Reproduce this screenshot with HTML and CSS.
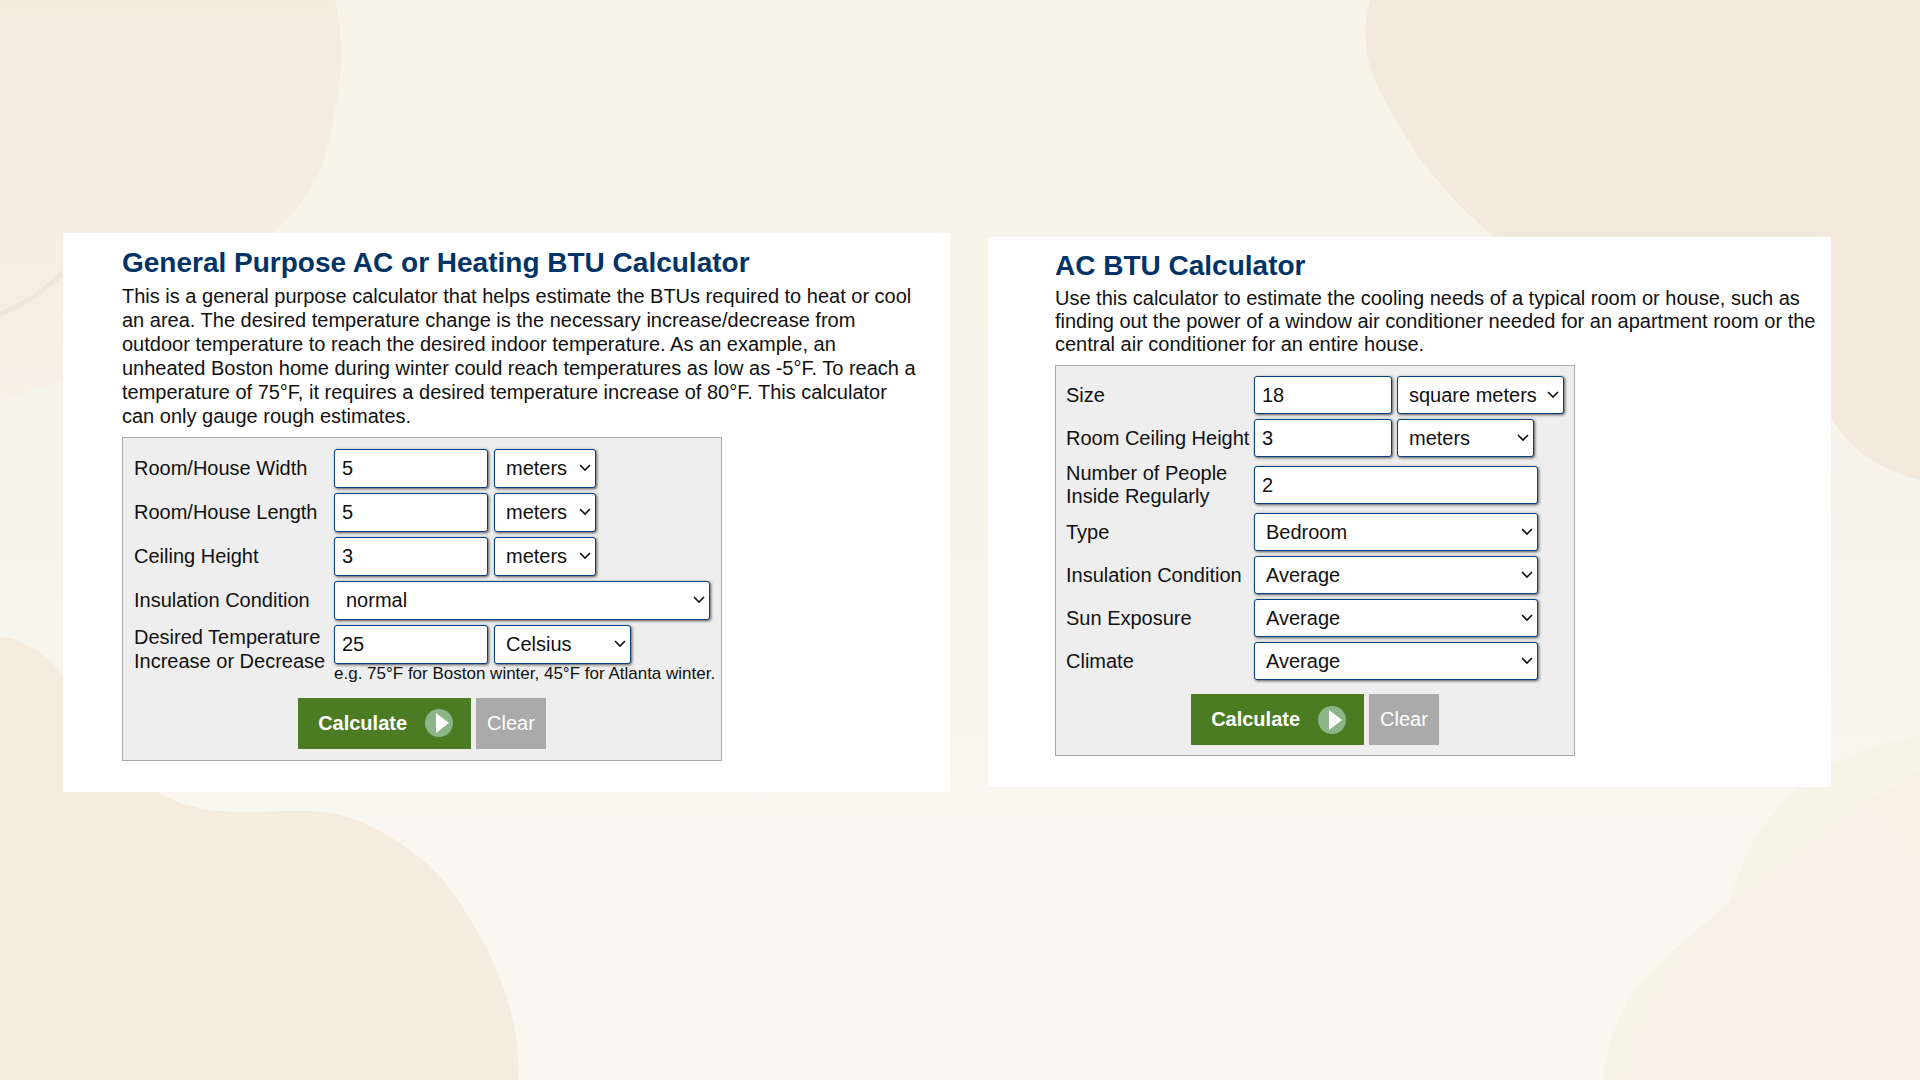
FILE: index.html
```html
<!DOCTYPE html>
<html lang="en">
<head>
  <meta charset="UTF-8">
  <meta name="viewport" content="width=device-width, initial-scale=1.0">
  <title>BTU Calculator</title>
  <link rel="stylesheet" href="styles.css">
</head>
<body>
  <svg class="backdrop" viewBox="0 0 1920 1080" preserveAspectRatio="none" aria-hidden="true">
    <defs>
      <linearGradient id="fade" x1="0" y1="0" x2="0" y2="1">
        <stop offset="0" stop-color="#f4ebdf"/>
        <stop offset="1" stop-color="#f7f0e6"/>
      </linearGradient>
      <linearGradient id="ridge" x1="1" y1="0" x2="0" y2="1">
        <stop offset="0" stop-color="#f6f0e5"/>
        <stop offset="0.3" stop-color="#f6f2e7"/>
      </linearGradient>
    </defs>
    <path fill="url(#fade)" d="M0 0H335C343 35 343 75 335 110C327 165 312 200 273 232C200 300 150 360 0 400Z"/>
    <path fill="#f3eadd" d="M1370 0C1361 35 1366 70 1385 100C1410 150 1446 197 1492 235C1580 310 1780 320 1831 418C1850 450 1880 470 1920 480V0Z"/>
    <path fill="#f4ecdf" d="M0 636C25 640 48 655 63 676C100 730 120 765 157 792C185 808 210 812 245 812C272 812 300 810 325 812C360 816 415 845 449 887C490 945 522 1010 518 1080H0Z"/>
    <path fill="#f6f3e7" d="M1920 736C1880 744 1850 754 1830 766C1780 796 1745 840 1730 902C1690 935 1655 965 1636 988C1615 1020 1606 1050 1603 1080H1920Z"/>
    <path fill="url(#ridge)" d="M1920 772C1850 805 1790 855 1730 902C1680 945 1640 990 1620 1080H1920Z"/>
    <path fill="none" stroke="#eee6d6" stroke-width="5" d="M-4 316C20 306 45 292 66 270"/>
  </svg>

  <main class="page">
    <section class="panel general">
      <h2>General Purpose AC or Heating BTU Calculator</h2>
      <p>This is a general purpose calculator that helps estimate the BTUs required to heat or cool an area. The desired temperature change is the necessary increase/decrease from outdoor temperature to reach the desired indoor temperature. As an example, an unheated Boston home during winter could reach temperatures as low as -5°F. To reach a temperature of 75°F, it requires a desired temperature increase of 80°F. This calculator can only gauge rough estimates.</p>

      <form class="calc">
        <div class="fields">
          <label for="width">Room/House Width</label>
          <div class="controls">
            <input type="text" id="width" value="5">
            <select aria-label="Width unit"><option>feet</option><option selected>meters</option></select>
          </div>

          <label for="length">Room/House Length</label>
          <div class="controls">
            <input type="text" id="length" value="5">
            <select aria-label="Length unit"><option>feet</option><option selected>meters</option></select>
          </div>

          <label for="ceiling">Ceiling Height</label>
          <div class="controls">
            <input type="text" id="ceiling" value="3">
            <select aria-label="Ceiling height unit"><option>feet</option><option selected>meters</option></select>
          </div>

          <label for="insulation">Insulation Condition</label>
          <div class="controls">
            <select id="insulation" class="full"><option>normal</option><option>good</option><option>poor</option></select>
          </div>

          <label for="temperature">Desired Temperature Increase or Decrease</label>
          <div class="controls">
            <input type="text" id="temperature" value="25">
            <select class="wide" aria-label="Temperature unit"><option>Fahrenheit</option><option selected>Celsius</option></select>
            <small>e.g. 75°F for Boston winter, 45°F for Atlanta winter.</small>
          </div>
        </div>
        <div class="buttons">
          <button type="button" class="calculate">Calculate
            <svg width="28" height="28" viewBox="0 0 28 28" aria-hidden="true">
              <circle cx="14" cy="14" r="14" fill="#8db587"/>
              <path d="M11 4L24 14L11 24Z" fill="#fff"/>
            </svg>
          </button>
          <button type="reset" class="clear">Clear</button>
        </div>
      </form>
    </section>

    <section class="panel ac">
      <h2>AC BTU Calculator</h2>
      <p>Use this calculator to estimate the cooling needs of a typical room or house, such as finding out the power of a window air conditioner needed for an apartment room or the central air conditioner for an entire house.</p>

      <form class="calc">
        <div class="fields">
          <label for="size">Size</label>
          <div class="controls">
            <input type="text" id="size" value="18">
            <select class="area" aria-label="Size unit"><option>square feet</option><option selected>square meters</option></select>
          </div>

          <label for="room-ceiling">Room Ceiling Height</label>
          <div class="controls">
            <input type="text" id="room-ceiling" value="3">
            <select class="wide" aria-label="Room ceiling height unit"><option>feet</option><option selected>meters</option></select>
          </div>

          <label for="people">Number of People Inside Regularly</label>
          <div class="controls">
            <input type="text" id="people" class="full" value="2">
          </div>

          <label for="type">Type</label>
          <div class="controls">
            <select id="type" class="full"><option>Bedroom</option><option>Kitchen</option></select>
          </div>

          <label for="room-insulation">Insulation Condition</label>
          <div class="controls">
            <select id="room-insulation" class="full"><option>Average</option><option>Good</option><option>Poor</option></select>
          </div>

          <label for="sun">Sun Exposure</label>
          <div class="controls">
            <select id="sun" class="full"><option>Average</option><option>Shaded</option><option>Sunny</option></select>
          </div>

          <label for="climate">Climate</label>
          <div class="controls">
            <select id="climate" class="full"><option>Average</option><option>Cold</option><option>Hot</option></select>
          </div>
        </div>
        <div class="buttons">
          <button type="button" class="calculate">Calculate
            <svg width="28" height="28" viewBox="0 0 28 28" aria-hidden="true">
              <circle cx="14" cy="14" r="14" fill="#8db587"/>
              <path d="M11 4L24 14L11 24Z" fill="#fff"/>
            </svg>
          </button>
          <button type="reset" class="clear">Clear</button>
        </div>
      </form>
    </section>
  </main>
</body>
</html>
```
FILE: styles.css
```css
* {
  box-sizing: border-box;
}
body {
  margin: 0;
  font-family: Arial, "Liberation Sans", sans-serif;
  font-size: 20px;
  line-height: 24px;
  color: #111;
  background: linear-gradient(#f6f3e8, #f7f4eb 50%, #faf7f0 80%);
}
.backdrop {
  position: absolute;
  top: 0;
  left: 0;
  width: 100%;
  height: 100%;
  z-index: -1;
}
.page {
  display: grid;
  grid-template-columns: 887fr 843fr;
  gap: 38px;
  align-items: center;
  min-height: 100vh;
  padding: 0 89px 56px 63px;
}
.panel {
  background: #fff;
  padding: 12px 12px 31px 59px;
}
.ac {
  padding-top: 11px;
  padding-left: 67px;
  line-height: 23px;
}
h2 {
  margin: 0 0 3px;
  font-size: 28px;
  line-height: 36px;
  color: #003366;
}
p {
  margin: 0 0 9px;
}
.general p {
  padding-right: 20px;
}
.calc {
  width: 600px;
  max-width: 100%;
  padding: 11px;
  background: #eee;
  border: 1px solid #aaa;
}
.ac .calc {
  width: 520px;
  padding: 10px;
}
.fields {
  display: grid;
  grid-template-columns: 200px minmax(0, 1fr);
  row-gap: 5px;
  align-items: center;
}
.ac .fields {
  grid-template-columns: 188px minmax(0, 1fr);
}
.general .fields label:last-of-type {
  align-self: start;
}
.controls {
  display: flex;
  flex-wrap: wrap;
  column-gap: 6px;
}
.ac .controls {
  column-gap: 5px;
}
input,
select {
  height: 39px;
  font: inherit;
  color: #111;
  background: #fff;
  border: 1px solid #044284;
  border-radius: 3px;
  box-shadow: 1px 1px 3px #555;
}
.ac input,
.ac select {
  height: 38px;
}
input {
  width: 154px;
  padding: 0 7px;
}
.ac input {
  width: 138px;
}
select {
  width: 102px;
  padding: 0 11px;
  appearance: none;
  background: #fff url("data:image/svg+xml,%3Csvg xmlns='http://www.w3.org/2000/svg' width='12' height='8'%3E%3Cpath d='M1 1l5 5 5-5' fill='none' stroke='%23111' stroke-width='1.6'/%3E%3C/svg%3E") no-repeat right 4px center;
}
.wide {
  width: 137px;
}
.area {
  width: 167px;
}
.full {
  width: 100%;
}
.ac .full {
  width: 284px;
}
small {
  width: 100%;
  font-size: 17px;
  line-height: 20px;
  white-space: nowrap;
}
.buttons {
  display: flex;
  justify-content: center;
  gap: 5px;
  margin-top: 14px;
}
button {
  height: 51px;
  border: none;
  font: inherit;
  color: #fff;
  cursor: pointer;
}
.calculate {
  display: flex;
  align-items: center;
  gap: 18px;
  padding: 0 18px 0 20px;
  font-weight: bold;
  background: #4b7b22;
}
.clear {
  padding: 0 11px;
  background: #aaa;
}
```
